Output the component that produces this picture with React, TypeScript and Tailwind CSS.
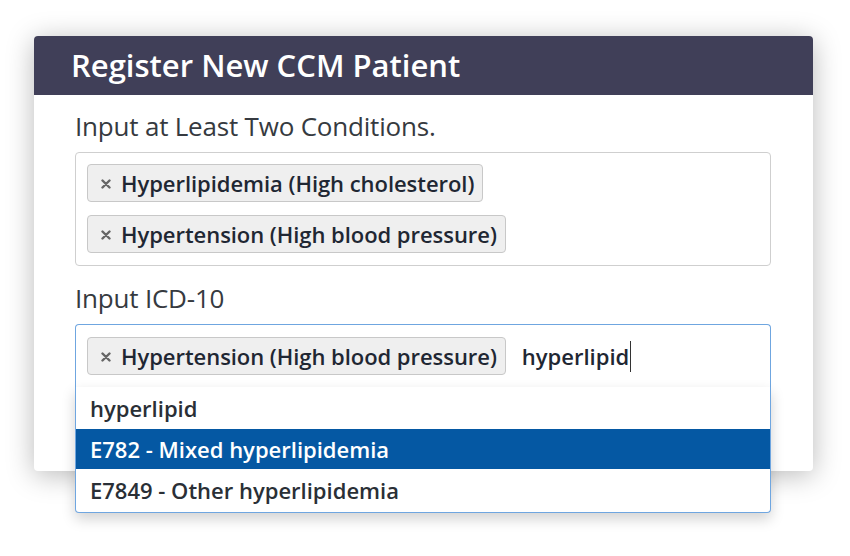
import React from "react";

const font = { fontFamily: '"Open Sans", "Noto Sans", sans-serif' };

function Tag({ label }: { label: string }) {
  return (
    <div className="flex h-[38px] items-center gap-[10px] rounded-[4px] border border-[#c8c8c8] bg-[#efefef] pl-[13px] pr-[8px]">
      <svg width="10" height="10" viewBox="0 0 10 10" className="mt-[1px]">
        <path d="M1.5 1.5 L8.5 8.5 M8.5 1.5 L1.5 8.5" stroke="#666" strokeWidth="2.4" strokeLinecap="round" />
      </svg>
      <span className="text-[22px] font-semibold tracking-[-0.05px] text-[#1f2733]">{label}</span>
    </div>
  );
}

export default function App() {
  return (
    <div className="h-[556px] w-[850px] bg-white pl-[34px] pt-[36px]" style={font}>
      <div className="relative h-[435px] w-[779px] rounded-[4px] bg-white shadow-[0_4px_28px_rgba(0,0,0,0.28)]">
        <div className="flex h-[59px] items-center rounded-t-[4px] bg-[#403f58] pl-[37px]">
          <h1 className="text-[31px] font-semibold text-white">Register New CCM Patient</h1>
        </div>
        <div className="px-[41px] pt-[15px]">
          <div className="text-[26px] font-normal leading-[32px] tracking-[-0.2px] text-[#363a40]">Input at Least Two Conditions.</div>
          <div className="mt-[10px] flex w-[696px] flex-col items-start gap-[13px] rounded-[4px] border border-[#cfcfcf] px-[11px] pb-[12px] pt-[11px]">
            <Tag label="Hyperlipidemia (High cholesterol)" />
            <Tag label="Hypertension (High blood pressure)" />
          </div>
          <div className="mt-[16px] text-[26px] font-normal leading-[32px] tracking-[-0.2px] text-[#363a40]">Input ICD-10</div>
          <div className="relative mt-[10px] w-[696px]">
            <div className="flex h-[63px] items-start gap-[16px] rounded-t-[4px] border border-b-0 border-[#6fa6e0] px-[11px] pt-[12px]">
              <Tag label="Hypertension (High blood pressure)" />
              <div className="flex h-[38px] items-center">
                <span className="text-[22px] font-semibold text-[#1f2733]">hyperlipid</span>
                <span className="ml-[1px] h-[31px] w-px bg-[#333]" />
              </div>
            </div>
            <div className="absolute left-0 top-[63px] z-10 w-[696px] overflow-hidden rounded-b-[4px] border border-t-0 border-[#6fa6e0] bg-white shadow-[0_6px_14px_rgba(0,0,0,0.18)]">
              <div className="flex h-[42px] items-center px-[14px] text-[22px] font-semibold text-[#2a2f36]">hyperlipid</div>
              <div className="flex h-[40px] items-center bg-[#0558a3] px-[14px] text-[22px] font-semibold text-white">E782 - Mixed hyperlipidemia</div>
              <div className="flex h-[43px] items-center px-[14px] text-[22px] font-semibold text-[#2a2f36]">E7849 - Other hyperlipidemia</div>
            </div>
          </div>
        </div>
      </div>
    </div>
  );
}
